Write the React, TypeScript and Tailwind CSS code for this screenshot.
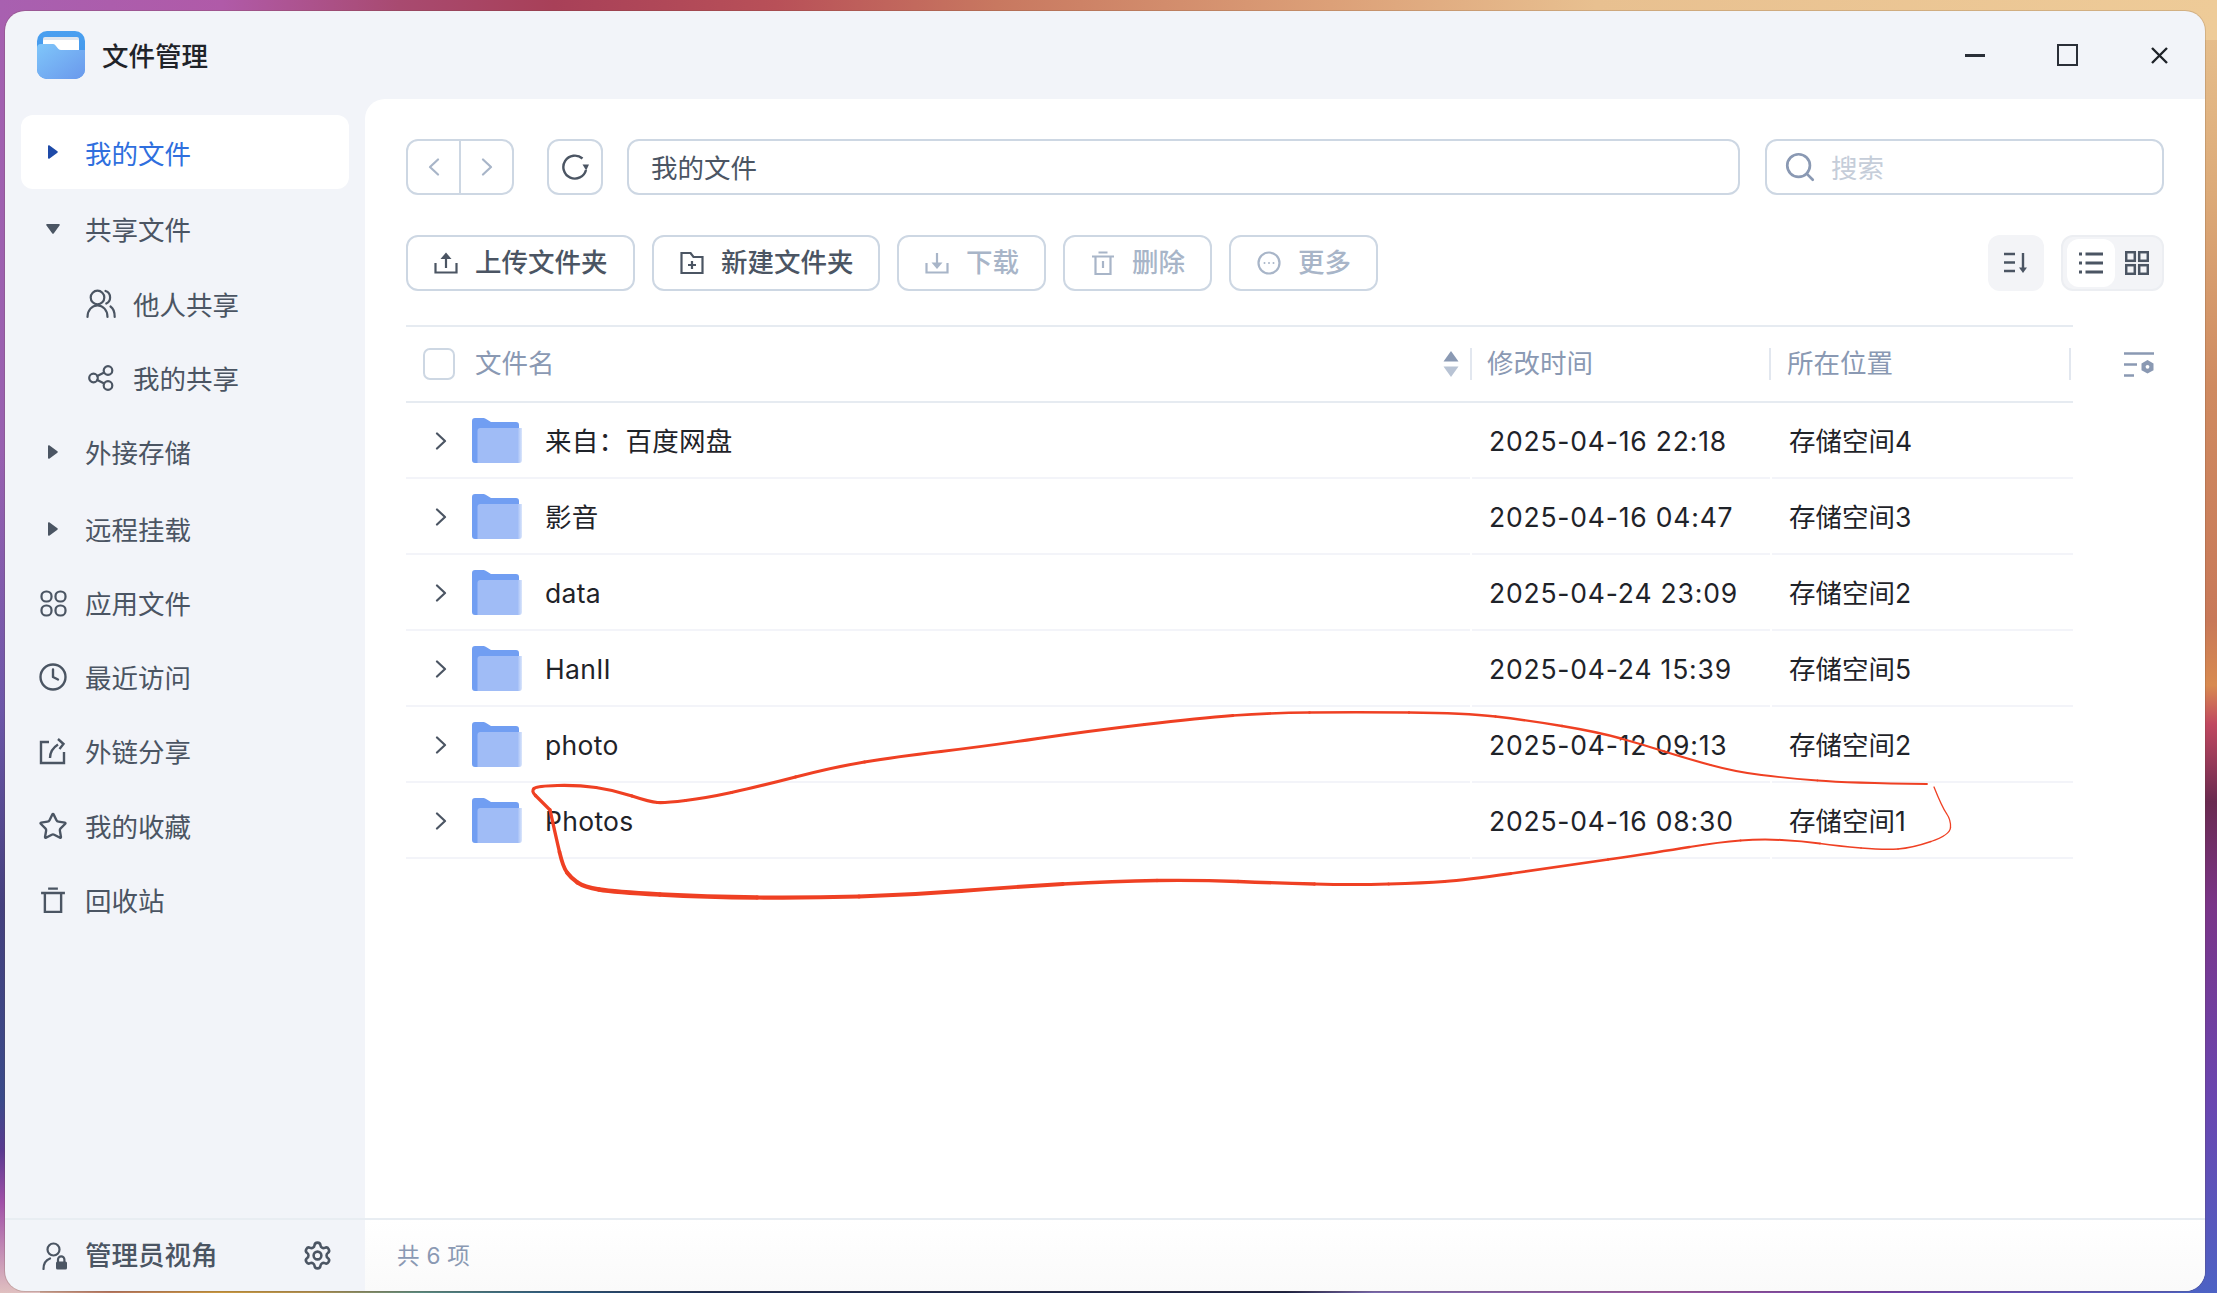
import { Clock, Search, Settings, Star } from "lucide-react"
import type { ReactNode } from "react"

const stroke = {
  fill: "none",
  stroke: "currentColor",
  strokeWidth: 2.2,
  strokeLinecap: "round",
  strokeLinejoin: "round",
} as const

function CaretRight({ className }: { className: string }) {
  return (
    <svg width="10" height="14" viewBox="0 0 10 14" className={className}>
      <path d="M0 1.2v11.6c0 .9 1 1.3 1.6.7l7.8-5.8c.5-.4.5-1 0-1.4L1.6.5C1 -.1 0 .3 0 1.2z" fill="currentColor" />
    </svg>
  )
}

function CaretDown() {
  return (
    <svg width="14" height="10" viewBox="0 0 14 10" className="text-[#4b5563]">
      <path d="M1.2 0h11.6c.9 0 1.3 1 .7 1.6L7.7 9.4c-.4.5-1 .5-1.4 0L.5 1.6C-.1 1 .3 0 1.2 0z" fill="currentColor" />
    </svg>
  )
}

function Chevron({ left, className }: { left?: boolean; className: string }) {
  return (
    <svg width="12" height="18" viewBox="0 0 12 18" {...stroke} className={className}>
      <path d={left ? "M10 1.500L2 9l8 7.500" : "M2 1.500L10 9l-8 7.500"} />
    </svg>
  )
}

function UsersIcon() {
  return (
    <svg width="30" height="30" viewBox="0 0 30 30" {...stroke}>
      <circle cx="11.500" cy="8.500" r="6.800" />
      <path d="M1.500 28c0-7 4.500-11.500 10-11.500s10 4.500 10 11.500" />
      <path d="M19.500 2c3 .9 4.600 3.500 4.600 6.500s-1.500 5-3.800 6" />
      <path d="M24.500 17.500c3 2 4.200 5.500 4.200 10.500" />
    </svg>
  )
}

function ShareIcon() {
  return (
    <svg width="26" height="26" viewBox="0 0 26 26" {...stroke}>
      <circle cx="5.500" cy="13" r="4.300" />
      <circle cx="20" cy="5.500" r="4.300" />
      <circle cx="20" cy="20.500" r="4.300" />
      <path d="M9.300 11l6.900-3.500M9.300 15l6.900 3.500" />
    </svg>
  )
}

function AppsIcon() {
  return (
    <svg width="27" height="27" viewBox="0 0 27 27" {...stroke}>
      <rect x="1.500" y="1.500" width="10" height="10" rx="4.600" />
      <rect x="15.500" y="1.500" width="10" height="10" rx="4.600" />
      <rect x="1.500" y="15.500" width="10" height="10" rx="4.600" />
      <rect x="15.500" y="15.500" width="10" height="10" rx="4.600" />
    </svg>
  )
}

function LinkShareIcon() {
  return (
    <svg width="28" height="27" viewBox="0 0 28 27" {...stroke} strokeWidth={2.4} strokeLinecap="butt" strokeLinejoin="miter">
      <path d="M10 4H2v21h23V14" />
      <path d="M11 20c0-6 2.500-10 8-13.500" />
      <path d="M19 1l5.500 5-4 5" />
    </svg>
  )
}

function TrashIcon({ size, line }: { size: number; line?: boolean }) {
  return (
    <svg width={size} height={size} viewBox="0 0 24 24" {...stroke} strokeLinecap="butt" strokeLinejoin="miter">
      <path d="M1 5.500h22M7.500 1.500h9M4.500 5.500V23h15V5.500" />
      {line && <path d="M12 10v7" />}
    </svg>
  )
}

function AdminIcon() {
  return (
    <svg width="26" height="28" viewBox="0 0 26 28" {...stroke}>
      <circle cx="11.500" cy="7.500" r="6" />
      <path d="M1.500 27c0-5.500 2.500-9 6.500-10.500" />
      <path d="M16 20v-2.500a3.200 3.200 0 0 1 6.400 0V20" />
      <rect x="14" y="19.500" width="11" height="8" rx="1.500" fill="currentColor" stroke="none" />
    </svg>
  )
}

function UploadIcon() {
  return (
    <svg width="24" height="22" viewBox="0 0 24 22" {...stroke} strokeLinecap="butt" strokeLinejoin="miter">
      <path d="M1.500 11v9.500h21V11" />
      <path d="M12 16V6" />
      <path d="M12 .5l5.500 6.500h-11z" fill="currentColor" stroke="none" />
    </svg>
  )
}

function DownloadIcon() {
  return (
    <svg width="24" height="22" viewBox="0 0 24 22" {...stroke} strokeLinecap="butt" strokeLinejoin="miter">
      <path d="M1.500 11v9.500h21V11" />
      <path d="M12 1v10" />
      <path d="M12 17l-5.500-6.500h11z" fill="currentColor" stroke="none" />
    </svg>
  )
}

function FolderPlusIcon() {
  return (
    <svg width="24" height="22" viewBox="0 0 24 22" {...stroke} strokeLinecap="butt" strokeLinejoin="miter">
      <path d="M1.500 1h9l3 4h9v16h-21z" />
      <path d="M12 9v8M8 13h8" />
    </svg>
  )
}

function MoreIcon() {
  return (
    <svg width="24" height="24" viewBox="0 0 24 24" {...stroke}>
      <circle cx="12" cy="12" r="10.500" />
      <circle cx="7.500" cy="12" r="1" fill="currentColor" stroke="none" />
      <circle cx="12" cy="12" r="1" fill="currentColor" stroke="none" />
      <circle cx="16.500" cy="12" r="1" fill="currentColor" stroke="none" />
    </svg>
  )
}

function RefreshIcon() {
  return (
    <svg width="28" height="28" viewBox="0 0 28 28" {...stroke} strokeWidth={2.4} strokeLinecap="butt" className="text-[#4b5563]">
      <path d="M21.500 5.500A11.500 11.500 0 1 0 25 17" />
      <path d="M21.500 11.500h6.500l-2.800 6z" fill="currentColor" stroke="none" />
    </svg>
  )
}

function SortIcon() {
  return (
    <svg width="24" height="22" viewBox="0 0 24 22" {...stroke} strokeWidth={2.4} strokeLinecap="butt" className="text-[#4b5563]">
      <path d="M0 2h11M0 10.500h11M0 19h11M19 1v16" />
      <path d="M15 15.500h8l-4 5.500z" fill="currentColor" stroke="none" />
    </svg>
  )
}

function ListIcon() {
  return (
    <svg width="24" height="22" viewBox="0 0 24 22" {...stroke} strokeWidth={2.8} strokeLinecap="butt" className="text-[#4b5563]">
      <path d="M0 2h3M0 11h3M0 20h3M6.500 2H24M6.500 11H24M6.500 20H24" />
    </svg>
  )
}

function GridIcon() {
  return (
    <svg width="24" height="24" viewBox="0 0 24 24" {...stroke} strokeWidth={2.5} strokeLinejoin="miter" className="text-[#4b5563]">
      <rect x="1.200" y="1.200" width="8.600" height="8.600" />
      <rect x="14.200" y="1.200" width="8.600" height="8.600" />
      <rect x="1.200" y="14.200" width="8.600" height="8.600" />
      <rect x="14.200" y="14.200" width="8.600" height="8.600" />
    </svg>
  )
}

function ColumnSettingsIcon() {
  return (
    <svg width="31" height="25" viewBox="0 0 31 25" className="text-[#8a99b3]">
      <path d="M0 1.500h30M0 12.500h13M0 23.500h10" fill="none" stroke="currentColor" strokeWidth="2.600" />
      <path d="M23.500 8l6 3.400v6.800l-6 3.400-6-3.400v-6.800z" fill="currentColor" />
      <circle cx="23.500" cy="14.800" r="1.900" fill="#ffffff" />
    </svg>
  )
}

function SortArrows() {
  return (
    <svg width="16" height="28" viewBox="0 0 16 28">
      <path d="M8 1l7.500 10.500H.5z" fill="#8a99b3" />
      <path d="M8 27l7.500-10.500H.5z" fill="#b8c3d4" />
    </svg>
  )
}

function FolderIcon() {
  return (
    <svg width="50" height="45" viewBox="0 0 50 45">
      <defs>
        <linearGradient id="fade" x1="0" x2="1" y1="0" y2="0">
          <stop offset="0.9" stopColor="#a0bcf6" />
          <stop offset="1" stopColor="#dbe6fb" />
        </linearGradient>
      </defs>
      <path d="M0 3a3 3 0 0 1 3-3h8c1.500 0 2.500.6 3.500 1.300L19 4h25a3 3 0 0 1 3 3v38H3a3 3 0 0 1-3-3z" fill="#719ef2" />
      <path d="M5.500 13a3 3 0 0 1 3-3H50v32a3 3 0 0 1-3 3H5.500z" fill="url(#fade)" />
    </svg>
  )
}

function AppLogo() {
  return (
    <svg width="48" height="48" viewBox="0 0 48 48">
      <defs>
        <linearGradient id="logoBack" x1="0" x2="0" y1="0" y2="1">
          <stop offset="0" stopColor="#4aa0f0" />
          <stop offset="1" stopColor="#3f8fe8" />
        </linearGradient>
        <linearGradient id="logoFront" x1="0" x2="1" y1="0" y2="1">
          <stop offset="0" stopColor="#7fc6fa" />
          <stop offset="1" stopColor="#6a98ec" />
        </linearGradient>
      </defs>
      <rect width="48" height="48" rx="10" fill="url(#logoBack)" />
      <rect x="6" y="6" width="36" height="14" rx="2" fill="#dfe6ee" />
      <rect x="6" y="9" width="36" height="12" rx="1" fill="#ffffff" />
      <path d="M0 17a4 4 0 0 1 4-4h12c3.500 0 4 6 8 6h24v19a10 10 0 0 1-10 10H10A10 10 0 0 1 0 38z" fill="url(#logoFront)" />
    </svg>
  )
}

type NavItem = {
  label: string
  icon: ReactNode
  className: string
  indent?: boolean
}

const navItems: NavItem[] = [
  { label: "共享文件", icon: <CaretDown />, className: "mt-[3px]" },
  { label: "他人共享", icon: <UsersIcon />, className: "mt-px", indent: true },
  { label: "我的共享", icon: <ShareIcon />, className: "", indent: true },
  { label: "外接存储", icon: <CaretRight className="text-[#4b5563]" />, className: "" },
  { label: "远程挂载", icon: <CaretRight className="text-[#4b5563]" />, className: "mt-[3px]" },
  { label: "应用文件", icon: <AppsIcon />, className: "" },
  { label: "最近访问", icon: <Clock size={30} strokeWidth={1.900} />, className: "" },
  { label: "外链分享", icon: <LinkShareIcon />, className: "" },
  { label: "我的收藏", icon: <Star size={31} strokeWidth={1.900} />, className: "mt-px" },
  { label: "回收站", icon: <TrashIcon size={26} />, className: "" },
]

const files = [
  { name: "来自：百度网盘", time: "2025-04-16 22:18", place: "存储空间4" },
  { name: "影音", time: "2025-04-16 04:47", place: "存储空间3" },
  { name: "data", time: "2025-04-24 23:09", place: "存储空间2" },
  { name: "HanII", time: "2025-04-24 15:39", place: "存储空间5" },
  { name: "photo", time: "2025-04-12 09:13", place: "存储空间2" },
  { name: "Photos", time: "2025-04-16 08:30", place: "存储空间1" },
]

const actions = [
  { label: "上传文件夹", icon: <UploadIcon />, enabled: true, width: "w-[229px]" },
  { label: "新建文件夹", icon: <FolderPlusIcon />, enabled: true, width: "w-[228px]" },
  { label: "下载", icon: <DownloadIcon />, enabled: false, width: "w-[149px]" },
  { label: "删除", icon: <TrashIcon size={24} line />, enabled: false, width: "w-[149px]" },
  { label: "更多", icon: <MoreIcon />, enabled: false, width: "w-[149px]" },
]

type Point = [number, number, number]

// the hand drawn line: x, y and pen width at each point
const scribble: Point[] = [
  [550, 810, 3.200], [540, 800, 3.200], [531, 791, 3.200], [537, 786, 3.200], [578, 785, 3.200], [614, 790, 3.200], [650, 802, 3.200], [665, 803, 3.200],
  [706, 798, 3.200], [757, 787, 3.200], [834, 767, 3], [895, 757, 3], [987, 746, 2.800], [1089, 731, 2.800], [1200, 718, 2.800],
  [1266, 713, 2.600], [1353, 712, 2.600], [1465, 713, 2.400], [1526, 720, 2.400], [1598, 732, 2.400], [1644, 745, 2.200], [1685, 758, 2.200],
  [1736, 772, 2], [1787, 778, 1.800], [1848, 783, 1.800], [1927, 784, 1.600],
]

const scribbleBack: Point[] = [
  [1934, 787, 1.300], [1942, 807, 1.300], [1951, 820, 1.300], [1950, 835, 1.300], [1912, 848, 1.400], [1884, 850, 1.500],
  [1838, 846, 1.700], [1802, 841, 1.900], [1761, 839, 2], [1720, 842, 2.200], [1659, 852, 2.400], [1557, 867, 2.600],
  [1465, 880, 2.800], [1424, 883, 3], [1353, 885, 3.200], [1276, 883, 3.300], [1200, 880, 3.400], [1114, 881, 3.600],
  [1012, 887, 3.800], [910, 895, 4], [808, 898, 4.200], [706, 897, 4.400], [614, 892, 4.400], [584, 887, 4.400],
  [571, 878, 4.200], [563, 867, 3.800], [556, 837, 3.400], [550, 810, 3.200],
]

// cut the line into short curves, each with its own pen width
function pieces(points: Point[]) {
  const out: { d: string; width: number }[] = []
  for (let i = 1; i < points.length - 1; i++) {
    const [px, py] = points[i - 1]
    const [x, y, width] = points[i]
    const [nx, ny] = points[i + 1]
    const startX = i === 1 ? px : (px + x) / 2
    const startY = i === 1 ? py : (py + y) / 2
    const endX = i === points.length - 2 ? nx : (x + nx) / 2
    const endY = i === points.length - 2 ? ny : (y + ny) / 2
    out.push({ d: `M${startX} ${startY} Q${x} ${y} ${endX} ${endY}`, width })
  }
  return out
}

export default function App() {
  return (
    <div className="relative flex h-[1293px] w-full flex-col overflow-hidden pt-[11px] pr-[12px] pb-[2px] pl-[5px] font-['Inter','Noto_Sans_CJK_SC',sans-serif] [background:linear-gradient(90deg,#a860b0_0%,#b05aa8_10%,#a84a70_18%,#a84058_25%,#b85058_35%,#c87860_45%,#dca078_60%,#e8c090_72%,#eecb98_100%)_top/100%_40px_no-repeat,linear-gradient(180deg,#e8c290_0%,#dcaa78_15%,#cf8a60_30%,#c87858_48%,#d88a50_53%,#c04860_56%,#6a2a50_62%,#7a3488_70%,#6a45b0_85%,#4d62c4_100%)_right/40px_100%_no-repeat,linear-gradient(180deg,#a560b0_0%,#9860b0_35%,#6c56a8_55%,#44407e_70%,#3a4a8a_85%,#5a3a90_89%,#a050a8_93%,#e0c0c0_100%)_left/40px_100%_no-repeat,linear-gradient(90deg,#d8c0b8_0%,#b87860_5%,#c89840_10%,#b09050_14%,#5a8a80_19%,#2a5a80_25%,#1a2a50_32%,#1a2040_58%,#7a6ab0_62%,#9a58a0_75%,#7040a8_85%,#4d62c4_100%)]">
      <div className="flex min-h-0 flex-1 flex-col overflow-hidden rounded-[20px] bg-[#f2f4f9] shadow-[0_0_0_1px_rgba(90,60,40,0.18)]">
        <header className="flex h-[88px] shrink-0 items-center pl-[32px]">
          <AppLogo />
          <span className="ml-[17px] pt-[3px] text-[26.5px] font-medium text-[#1f2329]">文件管理</span>
          <div className="ml-auto flex h-full items-center text-[#1f2329]">
            <div className="flex w-[92px] justify-center">
              <div className="h-[3px] w-[20px] bg-[#2a2f38]" />
            </div>
            <div className="flex w-[92px] justify-center">
              <div className="h-[22px] w-[21px] border-[2.500px] border-[#2a2f38]" />
            </div>
            <div className="flex w-[92px] justify-center">
              <svg width="17" height="17" viewBox="0 0 17 17" fill="none" stroke="#1f2329" strokeWidth="2.400">
                <path d="M1 1l15 15M16 1L1 16" />
              </svg>
            </div>
          </div>
        </header>

        <div className="flex min-h-0 flex-1">
          <aside className="w-[360px] shrink-0 px-4 pt-4 text-[26.5px] text-[#4b5563]">
            <div className="flex h-[74px] items-center rounded-[12px] bg-white pl-[27px] text-[#2f6fde]">
              <CaretRight className="text-[#1e4aa8]" />
              <span className="ml-[27px] pt-[5px]">我的文件</span>
            </div>
            {navItems.map((item) => (
              <div
                key={item.label}
                className={`flex h-[74px] items-center ${item.className} ${item.indent ? "pl-[65px]" : "pl-[17px]"}`}
              >
                <span className="flex w-[30px] shrink-0 justify-center">{item.icon}</span>
                <span className={`ml-[17px] pt-[3px]`}>{item.label}</span>
              </div>
            ))}
          </aside>

          <main className="min-w-0 flex-1 rounded-tl-[20px] bg-white pt-[40px] pr-[41px] pl-[41px]">
            <div className="flex h-[56px] items-stretch text-[26.5px]">
              <div className="flex w-[108px] rounded-[12px] border-2 border-[#cdd7e3] text-[#a8b5c8]">
                <div className="flex flex-1 items-center justify-center border-r-2 border-[#cdd7e3]">
                  <Chevron left className="text-[#a8b5c8]" />
                </div>
                <div className="flex flex-1 items-center justify-center">
                  <Chevron className="text-[#a8b5c8]" />
                </div>
              </div>
              <div className="ml-[33px] flex w-[56px] items-center justify-center rounded-[12px] border-2 border-[#cdd7e3]">
                <RefreshIcon />
              </div>
              <div className="ml-[24px] flex flex-1 items-center rounded-[12px] border-2 border-[#cdd7e3] pl-[22px] text-[#4b5563]">
                <span className="pt-[3px]">我的文件</span>
              </div>
              <div className="ml-[25px] flex w-[399px] items-center rounded-[12px] border-2 border-[#cdd7e3] pl-[16px] text-[#c5cdd9]">
                <Search size={34} strokeWidth={1.900} className="text-[#8a99b3]" />
                <span className="ml-[14px] pt-[3px]">搜索</span>
              </div>
            </div>

            <div className="mt-[40px] flex h-[56px] items-stretch gap-[17px] text-[26.5px]">
              {actions.map((action) => (
                <div
                  key={action.label}
                  className={`flex ${action.width} items-center rounded-[12px] border-2 border-[#cdd7e3] pl-[26px] ${action.enabled ? "text-[#4b5563]" : "text-[#a8b5c8]"}`}
                >
                  <span className="flex shrink-0">{action.icon}</span>
                  <span className="ml-[17px] font-medium">{action.label}</span>
                </div>
              ))}
              <div className="ml-auto flex w-[56px] items-center justify-center rounded-[12px] bg-[#f3f4f7]">
                <SortIcon />
              </div>
              <div className="flex w-[103px] items-center rounded-[12px] border-2 border-[#eceef2] bg-[#f3f4f7] pl-1">
                <div className="flex h-[48px] w-[48px] items-center justify-center rounded-[12px] bg-white">
                  <ListIcon />
                </div>
                <span className="ml-[10px] flex">
                  <GridIcon />
                </span>
              </div>
            </div>

            <div className="mt-[34px] flex">
              <div className="w-[1667px] shrink-0">
                <div className="flex h-[78px] items-center border-y-2 border-[#e6ebf1] text-[26.5px] text-[#8a99b3]">
                  <div className="flex h-[32px] w-[1066px] items-center pl-[17px]">
                    <div className="h-[32px] w-[32px] rounded-[7px] border-2 border-[#cdd7e3]" />
                    <span className="ml-[20px]">文件名</span>
                    <span className="mr-[11px] ml-auto flex">
                      <SortArrows />
                    </span>
                    <div className="h-[32px] w-[2px] bg-[#e2e7ef]" />
                  </div>
                  <div className="flex h-[32px] w-[299px] items-center pl-[15px]">
                    <span>修改时间</span>
                    <div className="ml-auto h-[32px] w-[2px] bg-[#e2e7ef]" />
                  </div>
                  <div className="flex h-[32px] flex-1 items-center pl-[16px]">
                    <span>所在位置</span>
                    <div className="ml-auto mr-[2px] h-[32px] w-[2px] bg-[#e2e7ef]" />
                  </div>
                </div>

                {files.map((file) => (
                  <div key={file.name} className="flex h-[76px] gap-[2px] text-[26.5px] text-[#1f2329]">
                    <div className="flex w-[1064px] items-center border-b-2 border-[#f3f4f9] pl-[29px]">
                      <Chevron className="mt-[2px] text-[#4b5563]" />
                      <span className="ml-[25px] flex">
                        <FolderIcon />
                      </span>
                      <span className="ml-[23px] pt-[3px] tracking-[0.3px]">{file.name}</span>
                    </div>
                    <div className="flex w-[298px] items-center border-b-2 border-[#f3f4f9] pl-[17px]">
                      <span className="pt-[3px] tracking-[0.8px]">{file.time}</span>
                    </div>
                    <div className="flex flex-1 items-center border-b-2 border-[#f3f4f9] pl-[17px]">
                      <span className="pt-[3px]">{file.place}</span>
                    </div>
                  </div>
                ))}
              </div>
              <div className="ml-[51px] pt-[27px]">
                <ColumnSettingsIcon />
              </div>
            </div>
          </main>
        </div>

        <footer className="flex h-[73px] shrink-0 border-t-2 border-[#e8edf2]">
          <div className="flex w-[360px] shrink-0 items-center pl-[37px] text-[26.5px] font-medium text-[#4b5563]">
            <AdminIcon />
            <span className="ml-[17px]">管理员视角</span>
            <Settings size={31} strokeWidth={2} className="ml-[84px]" />
          </div>
          <div className="flex flex-1 items-center bg-gradient-to-b from-white to-[#fafafa] pl-[32px] text-[22.5px] tracking-[0.3px] text-[#8a99b3]">
            共 6 项
          </div>
        </footer>
      </div>

      <svg
        viewBox="0 0 2217 1293"
        className="pointer-events-none absolute inset-0 h-full w-full"
        fill="none"
        stroke="#ef4023"
        strokeLinecap="round"
        strokeLinejoin="round"
      >
        {[...pieces(scribble), ...pieces(scribbleBack)].map((piece) => (
          <path key={piece.d} d={piece.d} strokeWidth={piece.width} />
        ))}
      </svg>
    </div>
  )
}
